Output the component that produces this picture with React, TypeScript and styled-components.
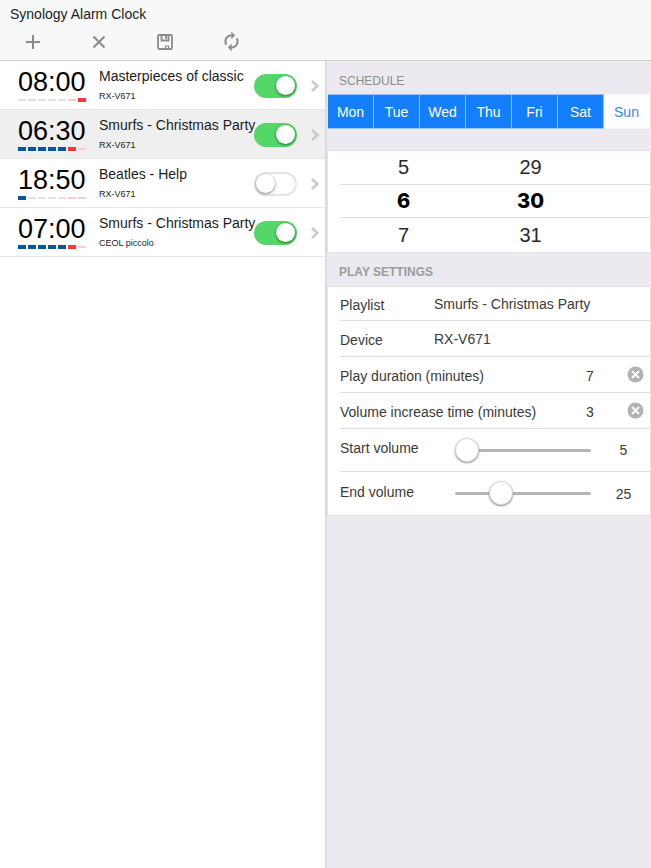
import React, { useState } from "react";
import styled, { createGlobalStyle } from "styled-components";

const GlobalStyle = createGlobalStyle`
  *, *::before, *::after { box-sizing: border-box; }
  body {
    margin: 0;
    background: #fff;
    color: #1c1c1c;
    font-family: "Liberation Sans", Arial, sans-serif;
    font-size: 14px;
  }
  button, input, select { font: inherit; color: inherit; margin: 0; }
  button { border: 0; padding: 0; background: none; cursor: pointer; }
`;

const Page = styled.div`
  display: flex;
  flex-direction: column;
  min-height: 100vh;
`;

const Header = styled.header`
  background: #f7f9f8;
  border-bottom: 1px solid #cfcfcf;
  padding-top: 6px;
`;

const AppTitle = styled.h1`
  margin: 0;
  padding: 0 10px;
  font-size: 14px;
  font-weight: 400;
  line-height: 17px;
`;

const Toolbar = styled.div`
  display: flex;
  height: 37px;
`;

const ToolButton = styled.button`
  display: flex;
  align-items: center;
  justify-content: center;
  width: 66px;
  color: #8b8b8b;
`;

const Columns = styled.div`
  display: flex;
  flex: 1;
`;

const AlarmList = styled.ul`
  flex: 1 1 325px;
  min-width: 0;
  margin: 0;
  padding: 0;
  list-style: none;
`;

const AlarmRow = styled.li<{ $selected: boolean }>`
  display: flex;
  align-items: center;
  height: 49px;
  padding: 0 5px 0 18px;
  border-bottom: 1px solid #e6e6e6;
  background: ${(p) => (p.$selected ? "#efefef" : "#fff")};
`;

const AlarmSummary = styled.button`
  display: flex;
  flex: 1;
  min-width: 0;
  height: 100%;
  gap: 11px;
  text-align: left;
`;

const TimeBlock = styled.span`
  display: flex;
  flex: none;
  flex-direction: column;
  width: 70px;
  padding-top: 5px;
`;

const Time = styled.span`
  font-size: 27px;
  line-height: 32px;
  color: #000;
`;

const DayMarks = styled.span`
  display: flex;
  align-items: center;
  gap: 2px;
  height: 4px;
`;

const DayMark = styled.span<{ $on: boolean; $weekend: boolean }>`
  width: 8px;
  height: ${(p) => (p.$on ? 4 : 2)}px;
  background: ${(p) =>
    p.$weekend ? (p.$on ? "#ff3434" : "#ffc9cc") : p.$on ? "#0d569f" : "#e2e2e2"};
`;

const AlarmText = styled.span`
  display: flex;
  flex-direction: column;
  gap: 5px;
  padding-top: 6px;
  white-space: nowrap;
`;

const AlarmName = styled.span`
  line-height: 18px;
`;

const AlarmDevice = styled.span`
  font-size: 9px;
  line-height: 12px;
`;

const Toggle = styled.input`
  appearance: none;
  flex: none;
  display: flex;
  align-items: center;
  width: 43px;
  height: 24px;
  margin-right: 13px;
  margin-top: 2px;
  padding: 0 0 1px;
  border: 2px solid #e6e6e6;
  border-radius: 12px;
  background: #fff;
  &::before {
    content: "";
    width: 19px;
    height: 19px;
    border-radius: 50%;
    background: #fff;
    box-shadow: 0 1px 3px rgba(0, 0, 0, 0.5);
  }
  &:checked {
    justify-content: flex-end;
    border-color: #53d769;
    background: #53d769;
  }
`;

const DetailButton = styled.button`
  display: flex;
  padding-top: 2px;
  color: #cbcbcd;
`;

const Details = styled.main`
  flex: 1 1 326px;
  min-width: 0;
  background: #ece9f0;
  border-left: 2px solid #dcdce0;
`;

const SectionTitle = styled.h2<{ $tall?: boolean }>`
  margin: 0;
  padding: ${(p) => (p.$tall ? "13px 12px 5px" : "12px 12px 6px")};
  font-size: 12px;
  font-weight: ${(p) => (p.$tall ? 400 : 700)};
  line-height: 15px;
  color: ${(p) => (p.$tall ? "#8c8c8c" : "#9c9c9c")};
`;

const DayPicker = styled.div`
  display: grid;
  grid-template-columns: repeat(7, 1fr);
  margin: 0 1px 21px;
`;

const DayButton = styled.button<{ $on: boolean }>`
  height: 35px;
  border: solid ${(p) => (p.$on ? "#98c6ff" : "#f4f4f8")};
  border-width: 1px 1px 1px 0;
  background: ${(p) => (p.$on ? "#157efb" : "#fff")};
  color: ${(p) => (p.$on ? "#fff" : "#2f8cf5")};
`;

const Card = styled.section`
  padding-left: 12px;
  background: #fff;
  border: 1px solid #e3e2e7;
`;

const PickerRow = styled.div<{ $current: boolean }>`
  display: grid;
  grid-template-columns: 127px 127px 1fr;
  height: ${(p) => (p.$current ? 33 : 34)}px;
  border-bottom: 1px solid #dedede;
  font-size: 20px;
  color: #2a2a2a;
  &:last-child { border-bottom: 0; }
  ${(p) => p.$current && "color: #000; font-family: Inter, sans-serif; font-weight: 800;"}
`;

const Field = styled.div<{ $tall?: boolean }>`
  display: flex;
  align-items: center;
  height: ${(p) => (p.$tall ? 43 : 36)}px;
  padding-right: 6px;
  border-bottom: 1px solid #dedede;
  color: #3a3a3a;
  &:first-child { height: 34px; }
  &:last-child { border-bottom: 0; }
`;

const FieldLabel = styled.label<{ $wide?: boolean }>`
  flex: ${(p) => (p.$wide ? "1" : "none")};
  width: 94px;
  padding-top: 2px;
`;

const Choice = styled.select`
  appearance: none;
  flex: 1;
  min-width: 0;
  padding: 0;
  border: 0;
  background: transparent;
`;

const Minutes = styled.input`
  width: 24px;
  padding: 2px 0 0;
  border: 0;
  background: transparent;
  text-align: center;
`;

const ClearButton = styled.button`
  display: flex;
  margin-left: 25px;
`;

const SliderLabel = styled.label`
  width: 115px;
  padding-bottom: 4px;
`;

const Slider = styled.input`
  appearance: none;
  flex: none;
  width: 136px;
  height: 26px;
  background: transparent;
  &::-webkit-slider-runnable-track {
    height: 3px;
    border-radius: 2px;
    background: #b6b6b6;
  }
  &::-webkit-slider-thumb {
    appearance: none;
    width: 24px;
    height: 24px;
    margin-top: -11px;
    border: 1px solid #d6d6d6;
    border-radius: 50%;
    background: #fff;
    box-shadow: 0 1px 2px rgba(0, 0, 0, 0.45);
  }
`;

const Level = styled.output`
  flex: 1;
  padding-left: 12px;
  text-align: center;
`;

const PlusIcon = () => (
  <svg width="16" height="16" viewBox="0 0 16 16" stroke="currentColor" strokeWidth="2">
    <path d="M8 1v14M1 8h14" />
  </svg>
);

const CrossIcon = () => (
  <svg width="16" height="16" viewBox="0 0 16 16" stroke="currentColor" strokeWidth="2">
    <path d="M2.500 2.500l11 11M13.500 2.500l-11 11" />
  </svg>
);

const SaveIcon = () => (
  <svg width="16" height="16" viewBox="0 0 16 16" fill="none" stroke="currentColor" strokeWidth="1.800">
    <rect x="1" y="1" width="14" height="14" rx="1.200" />
    <path d="M4.500 1v5.500h7V1M9 2v3" />
    <path d="M8.500 14v-2h3v2" strokeWidth="1.200" />
  </svg>
);

const RefreshIcon = () => (
  <svg width="19" height="19" viewBox="2 1 20 22" fill="currentColor">
    <path d="M12 6v3l4-4-4-4v3c-4.420 0-8 3.580-8 8 0 1.570.460 3.030 1.240 4.260L6.700 14.800c-.450-.830-.700-1.790-.700-2.800 0-3.310 2.690-6 6-6zm6.760 1.740L17.300 9.200c.440.840.700 1.790.700 2.800 0 3.310-2.690 6-6 6v-3l-4 4 4 4v-3c4.420 0 8-3.580 8-8 0-1.570-.460-3.030-1.240-4.260z" stroke="currentColor" strokeWidth="0.400" />
  </svg>
);

const ChevronIcon = () => (
  <svg width="10" height="14" viewBox="0 0 10 14" fill="none" stroke="currentColor" strokeWidth="2.600">
    <path d="M2 2L7.300 7 2 12" />
  </svg>
);

const ClearIcon = () => (
  <svg width="17" height="17" viewBox="0 0 17 17">
    <circle cx="8.500" cy="8.500" r="8" fill="#b3b3b3" />
    <path d="M5 5l7 7M12 5l-7 7" stroke="#fff" strokeWidth="1.800" />
  </svg>
);

const DAYS = ["Mon", "Tue", "Wed", "Thu", "Fri", "Sat", "Sun"];

const ALARMS = [
  { time: "08:00", name: "Masterpieces of classic", device: "RX-V671", days: [6], on: true },
  { time: "06:30", name: "Smurfs - Christmas Party", device: "RX-V671", days: [0, 1, 2, 3, 4, 5], on: true },
  { time: "18:50", name: "Beatles - Help", device: "RX-V671", days: [0], on: false },
  { time: "07:00", name: "Smurfs - Christmas Party", device: "CEOL piccolo", days: [0, 1, 2, 3, 4, 5], on: true },
];

const TIMES = [
  { hour: 5, minute: 29 },
  { hour: 6, minute: 30 },
  { hour: 7, minute: 31 },
];

function VolumeField({ id, label, initial }: { id: string; label: string; initial: number }) {
  const [value, setValue] = useState(initial);
  return (
    <Field $tall>
      <SliderLabel htmlFor={id}>{label}</SliderLabel>
      <Slider id={id} type="range" min={5} max={71} value={value} onChange={(e) => setValue(Number(e.target.value))} />
      <Level htmlFor={id}>{value}</Level>
    </Field>
  );
}

function MinutesField({ id, label, initial }: { id: string; label: string; initial: string }) {
  const [value, setValue] = useState(initial);
  return (
    <Field>
      <FieldLabel $wide htmlFor={id}>{label}</FieldLabel>
      <Minutes id={id} type="text" inputMode="numeric" value={value} onChange={(e) => setValue(e.target.value)} />
      <ClearButton aria-label={`Clear ${label}`} onClick={() => setValue("")}>
        <ClearIcon />
      </ClearButton>
    </Field>
  );
}

export default function App() {
  const [selected, setSelected] = useState(1);
  const [days, setDays] = useState([0, 1, 2, 3, 4, 5]);
  const toggleDay = (day: number) =>
    setDays((list) => (list.includes(day) ? list.filter((d) => d !== day) : [...list, day]));

  return (
    <Page>
      <GlobalStyle />
      <Header>
        <AppTitle>Synology Alarm Clock</AppTitle>
        <Toolbar>
          <ToolButton aria-label="Add"><PlusIcon /></ToolButton>
          <ToolButton aria-label="Delete"><CrossIcon /></ToolButton>
          <ToolButton aria-label="Save"><SaveIcon /></ToolButton>
          <ToolButton aria-label="Refresh"><RefreshIcon /></ToolButton>
        </Toolbar>
      </Header>
      <Columns>
        <AlarmList>
          {ALARMS.map((alarm, i) => (
            <AlarmRow key={alarm.time} $selected={i === selected}>
              <AlarmSummary onClick={() => setSelected(i)}>
                <TimeBlock>
                  <Time>{alarm.time}</Time>
                  <DayMarks>
                    {DAYS.map((day, d) => (
                      <DayMark key={day} $on={alarm.days.includes(d)} $weekend={d > 4} />
                    ))}
                  </DayMarks>
                </TimeBlock>
                <AlarmText>
                  <AlarmName>{alarm.name}</AlarmName>
                  <AlarmDevice>{alarm.device}</AlarmDevice>
                </AlarmText>
              </AlarmSummary>
              <Toggle type="checkbox" role="switch" aria-label={`${alarm.time} enabled`} defaultChecked={alarm.on} />
              <DetailButton aria-label={`Open ${alarm.time}`} onClick={() => setSelected(i)}>
                <ChevronIcon />
              </DetailButton>
            </AlarmRow>
          ))}
        </AlarmList>
        <Details>
          <SectionTitle $tall>SCHEDULE</SectionTitle>
          <DayPicker role="group" aria-label="Days">
            {DAYS.map((day, d) => (
              <DayButton key={day} $on={days.includes(d)} aria-pressed={days.includes(d)} onClick={() => toggleDay(d)}>
                {day}
              </DayButton>
            ))}
          </DayPicker>
          <Card aria-label="Time">
            {TIMES.map((t) => (
              <PickerRow key={t.hour} $current={t.hour === 6}>
                <button>{t.hour}</button>
                <button>{t.minute}</button>
              </PickerRow>
            ))}
          </Card>
          <SectionTitle>PLAY SETTINGS</SectionTitle>
          <Card aria-label="Play settings">
            <Field>
              <FieldLabel htmlFor="playlist">Playlist</FieldLabel>
              <Choice id="playlist" defaultValue="Smurfs - Christmas Party">
                <option>Smurfs - Christmas Party</option>
              </Choice>
            </Field>
            <Field>
              <FieldLabel htmlFor="device">Device</FieldLabel>
              <Choice id="device" defaultValue="RX-V671">
                <option>RX-V671</option>
              </Choice>
            </Field>
            <MinutesField id="duration" label="Play duration (minutes)" initial="7" />
            <MinutesField id="increase" label="Volume increase time (minutes)" initial="3" />
            <VolumeField id="start" label="Start volume" initial={5} />
            <VolumeField id="end" label="End volume" initial={25} />
          </Card>
        </Details>
      </Columns>
    </Page>
  );
}
